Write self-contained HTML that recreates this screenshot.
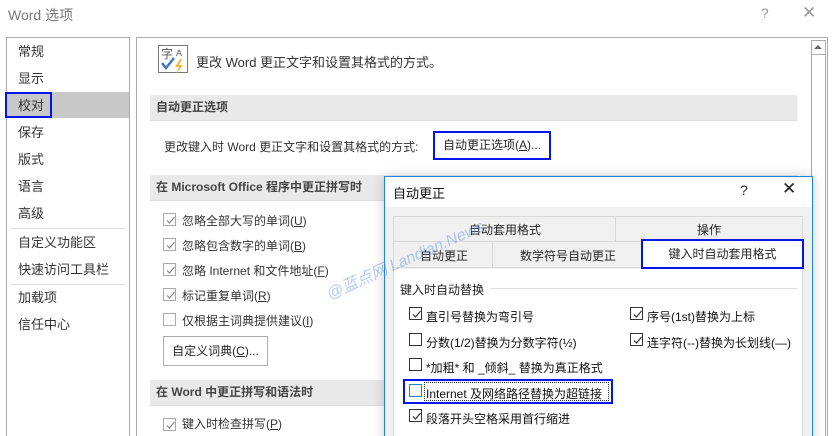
<!DOCTYPE html>
<html><head><meta charset="utf-8"><style>
*{margin:0;padding:0;box-sizing:border-box}
html{width:834px;height:436px;overflow:hidden}
body{width:834px;height:436px;overflow:hidden;background:#fff;font-family:"Liberation Sans","Noto Sans CJK SC",sans-serif;font-size:12px;color:#262626;position:relative}
.a{position:absolute;white-space:nowrap}
.nav{left:6px;top:37px;width:124px;height:410px;border:1px solid #ababab}
.main{left:136px;top:37px;width:692px;height:410px;border:1px solid #ababab}
.band{background:#e9e9e9;border-bottom:1px solid #dcdcdc;height:26px;line-height:25px;padding-left:6px;font-weight:bold;color:#444}
.cb{width:13px;height:13px;border:1px solid #333;background:#fff;position:absolute}
.cbg{border-color:#aaa}
.cb svg{position:absolute;left:1px;top:1px}
.btn{border:1px solid #adadad;background:#fff;text-align:center}
</style></head><body>
<div class="a" style="left:8px;top:5px;font-size:14px;color:#777">Word 选项</div>
<div class="a" style="left:761px;top:5px;font-size:14px;color:#999">?</div>
<div class="a" style="left:802px;top:3px;font-size:17px;color:#999">✕</div>

<div class="a nav"></div>
<div class="a" style="left:7px;top:92px;width:122px;height:26px;background:#c8c8c8"></div>
<div class="a" style="left:5px;top:92px;width:47px;height:26px;border:2px solid #0016e8"></div>
<div class="a" style="left:18px;top:38px;line-height:27px;font-size:13px;color:#333">常规<br>显示<br>校对<br>保存<br>版式<br>语言<br>高级</div>
<div class="a" style="left:10px;top:228px;width:116px;height:1px;background:#ddd"></div>
<div class="a" style="left:18px;top:229px;line-height:27px;font-size:13px;color:#333">自定义功能区<br>快速访问工具栏</div>
<div class="a" style="left:10px;top:284px;width:116px;height:1px;background:#ddd"></div>
<div class="a" style="left:18px;top:284px;line-height:27px;font-size:13px;color:#333">加载项<br>信任中心</div>

<div class="a main"></div>
<div class="a" style="left:811px;top:40px;width:15px;height:400px;border:1px solid #ababab;background:#fff"></div>
<div class="a" style="left:812px;top:41px;width:13px;height:14px;border-bottom:1px solid #ababab"></div>
<div class="a" style="left:814px;top:45px;border:4px solid transparent;border-bottom:4px solid #666;border-top:0"></div>

<svg class="a" style="left:158px;top:45px" width="32" height="30"><rect x="0.5" y="0.5" width="29" height="27" fill="#fff" stroke="#777"/><text x="3" y="13" font-size="12" fill="#555" font-family="Noto Sans CJK SC">字</text><text x="18" y="11" font-size="9" fill="#555">A</text><path d="M4 18l4 5 8-10" stroke="#3b78c4" stroke-width="2.5" fill="none"/><path d="M22 14l-5 8h4l-3 7 7-9h-4l3-6z" fill="#f0b440"/></svg>
<div class="a" style="left:196px;top:52px;font-size:13px;color:#333">更改 Word 更正文字和设置其格式的方式。</div>

<div class="a band" style="left:150px;top:95px;width:647px">自动更正选项</div>
<div class="a" style="left:164px;top:138px;color:#333">更改键入时 Word 更正文字和设置其格式的方式:</div>
<div class="a btn" style="left:433px;top:131px;width:118px;height:29px;border:2px solid #0016e8;line-height:25px">自动更正选项(<u>A</u>)...</div>

<div class="a band" style="left:150px;top:175px;width:647px">在 Microsoft Office 程序中更正拼写时</div>
<div class="a" style="left:182px;top:209px;line-height:25px;color:#333">忽略全部大写的单词(<u>U</u>)<br>忽略包含数字的单词(<u>B</u>)<br>忽略 Internet 和文件地址(<u>F</u>)<br>标记重复单词(<u>R</u>)<br>仅根据主词典提供建议(<u>I</u>)</div>
<div class="a btn" style="left:163px;top:336px;width:105px;height:30px;line-height:28px">自定义词典(<u>C</u>)...</div>
<div class="a band" style="left:150px;top:380px;width:647px">在 Word 中更正拼写和语法时</div>
<div class="a" style="left:182px;top:415px;color:#333">键入时检查拼写(<u>P</u>)</div>

<!-- dialog -->
<div class="a" style="left:384px;top:176px;width:429px;height:270px;border:1px solid #1a86e0;background:#f0f0f0;box-shadow:0 0 12px rgba(0,0,0,.2)"></div>
<div class="a" style="left:385px;top:177px;width:427px;height:30px;background:#fff"></div>
<div class="a" style="left:393px;top:183px;font-size:13px;color:#111">自动更正</div>
<div class="a" style="left:740px;top:182px;font-size:14px;color:#222">?</div>
<div class="a" style="left:782px;top:179px;font-size:17px;color:#222">✕</div>
<div class="a" style="left:393px;top:216px;width:410px;height:26px;border:1px solid #d9d9d9"></div>
<div class="a" style="left:615px;top:216px;width:1px;height:26px;background:#d9d9d9"></div>
<div class="a" style="left:469px;top:221px">自动套用格式</div>
<div class="a" style="left:697px;top:221px">操作</div>
<div class="a" style="left:393px;top:241px;width:410px;height:27px;border:1px solid #d9d9d9"></div>
<div class="a" style="left:492px;top:241px;width:1px;height:27px;background:#d9d9d9"></div>
<div class="a" style="left:420px;top:247px">自动更正</div>
<div class="a" style="left:520px;top:247px">数学符号自动更正</div>
<div class="a" style="left:641px;top:239px;width:163px;height:30px;border:2px solid #0016e8;background:#fff;text-align:center;line-height:26px">键入时自动套用格式</div>
<div class="a" style="left:393px;top:269px;width:410px;height:170px;background:#fff;border:1px solid #d9d9d9;border-top:0"></div>
<div class="a" style="left:400px;top:281px;color:#222">键入时自动替换</div>
<div class="a" style="left:490px;top:288px;width:307px;height:1px;background:#ddd"></div>
<div class="a" style="left:426px;top:305px;line-height:25.5px;color:#111">直引号替换为弯引号<br>分数(1/2)替换为分数字符(½)<br>*加粗* 和 _倾斜_ 替换为真正格式<br>Internet 及网络路径替换为超链接<br>段落开头空格采用首行缩进</div>
<div class="a" style="left:647px;top:305px;line-height:25.5px;color:#111">序号(1st)替换为上标<br>连字符(--)替换为长划线(—)</div>
<div class="a" style="left:403px;top:379px;width:210px;height:25px;border:2px solid #0016e8"></div>
<div class="a" style="left:424px;top:382px;width:185px;height:19px;border:1px dotted #333"></div>

<div class="a" style="left:322px;top:282px;transform:rotate(-24deg);transform-origin:left top;font-size:16px;color:rgba(90,140,230,.45);font-style:italic">@蓝点网 Landian.News</div>

<script>
var ck='<svg width="11" height="11"><path d="M2 5.5l2.5 2.5 5-6" stroke="#333" stroke-width="1.2" fill="none"/></svg>';
var ckg='<svg width="11" height="11"><path d="M2 5.5l2.5 2.5 5-6" stroke="#888" stroke-width="1.2" fill="none"/></svg>';
function cb(x,y,c,g){var d=document.createElement('div');d.className='cb'+(g?' cbg':'');d.style.left=x+'px';d.style.top=y+'px';if(c)d.innerHTML=g?ckg:ck;document.body.appendChild(d);}
[[213,1],[238,1],[263,1],[288,1],[313,0],[418,1]].forEach(function(r){cb(163,r[0],r[1],1)});
[[307,1],[333,0],[358,0],[384,0],[409,1]].forEach(function(r){cb(409,r[0],r[1],0)});
cb(630,307,1,0);cb(630,333,1,0);
document.querySelectorAll('.cb')[9].style.borderColor='#1a86e0';
</script>
</body></html>
